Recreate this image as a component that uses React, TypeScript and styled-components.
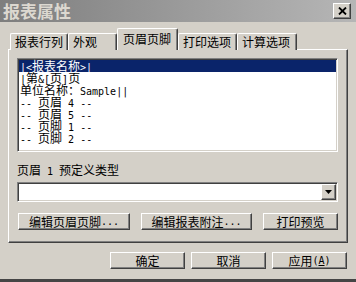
import React from "react";
import styled, { createGlobalStyle, css } from "styled-components";

const Global = createGlobalStyle`
  html, body { margin: 0; padding: 0; background: #d4d0c8; }
  body { font-family: "Noto Sans CJK SC", sans-serif; font-size: 12px; color: #000; }
  * { box-sizing: border-box; }
`;

const raised = css`
  border: 1px solid;
  border-color: #ffffff #404040 #404040 #ffffff;
  box-shadow: inset -1px -1px #808080;
`;

const sunken = css`
  border: 1px solid;
  border-color: #808080 #ffffff #ffffff #808080;
  box-shadow: inset 1px 1px #404040, inset -1px -1px #d4d0c8;
`;

const Window = styled.div`
  width: 356px;
  height: 282px;
  background: #d4d0c8;
  display: flex;
  flex-direction: column;
  border-bottom: 3px solid #454545;
  overflow: hidden;
`;

const TitleBar = styled.div`
  height: 22px;
  flex: none;
  display: flex;
  align-items: center;
  justify-content: space-between;
  padding: 0 5px 0 3px;
  background: linear-gradient(to right, #7e7e7e, #b6b6b6);
`;

const Title = styled.span`
  font-size: 17px;
  font-weight: 700;
  line-height: 18px;
  color: #dcd8d0;
`;

const CloseButton = styled.div`
  width: 18px;
  height: 16px;
  background: #d4d0c8;
  ${raised};
  display: flex;
  align-items: center;
  justify-content: center;
`;

const TabStrip = styled.div`
  margin-top: 6px;
  height: 22px;
  padding-left: 10px;
  display: flex;
  align-items: flex-end;
  margin-bottom: -1px;
  position: relative;
  z-index: 1;
`;

const Tab = styled.div<{ $w: number; $active?: boolean }>`
  width: ${(p) => p.$w}px;
  height: ${(p) => (p.$active ? 22 : 17)}px;
  background: #d4d0c8;
  border-top: 1px solid #ffffff;
  border-left: 1px solid #ffffff;
  border-right: 1px solid #404040;
  box-shadow: inset -1px 0 #808080;
  border-top-left-radius: 2px;
  border-top-right-radius: 2px;
  display: flex;
  align-items: center;
  padding-left: ${(p) => (p.$active ? 5 : 4)}px;
  padding-bottom: ${(p) => (p.$active ? 2 : 0)}px;
  white-space: nowrap;
  line-height: 14px;
`;

const Panel = styled.div`
  margin-left: 8px;
  width: 340px;
  height: 194px;
  flex: none;
  ${raised};
  padding: 8px 8px 0 8px;
  display: flex;
  flex-direction: column;
`;

const ListBox = styled.div`
  width: 321px;
  height: 94px;
  flex: none;
  background: #ffffff;
  ${sunken};
  padding: 1px;
  display: flex;
  flex-direction: column;
`;

const ListItem = styled.div<{ $selected?: boolean }>`
  height: 12px;
  line-height: 12px;
  padding-left: 1px;
  white-space: pre;
  background: ${(p) => (p.$selected ? "#0a246a" : "transparent")};
  color: ${(p) => (p.$selected ? "#ffffff" : "#000000")};
`;

const Latin = styled.span`
  font-family: "DejaVu Sans Mono", "Liberation Mono", monospace;
  font-size: 10px;
`;

const Label = styled.div`
  margin-top: 11px;
  height: 14px;
  line-height: 14px;
  white-space: pre;
`;

const Combo = styled.div`
  margin-top: 5px;
  width: 321px;
  height: 20px;
  flex: none;
  background: #ffffff;
  ${sunken};
  padding: 1px;
  display: flex;
  justify-content: flex-end;
`;

const DropButton = styled.div`
  width: 15px;
  height: 16px;
  background: #d4d0c8;
  ${raised};
  display: flex;
  align-items: center;
  justify-content: center;
`;

const ButtonRow = styled.div`
  margin-top: 11px;
  margin-left: 1px;
  display: flex;
  gap: 11px;
`;

const Button = styled.div<{ $w: number }>`
  width: ${(p) => p.$w}px;
  height: 17px;
  background: #d4d0c8;
  ${raised};
  display: flex;
  align-items: center;
  justify-content: center;
  line-height: 14px;
  white-space: pre;
`;

const FooterRow = styled.div`
  margin-top: 9px;
  padding-right: 9px;
  display: flex;
  justify-content: flex-end;
  gap: 6px;
`;

function Mixed({ text }: { text: string }) {
  const parts = text.match(/[\x00-\x7f]+|[^\x00-\x7f]+/g) ?? [];
  return (
    <>
      {parts.map((p, i) =>
        /^[\x00-\x7f]/.test(p) ? (
          <Latin key={i}>{p}</Latin>
        ) : (
          <React.Fragment key={i}>{p}</React.Fragment>
        )
      )}
    </>
  );
}

const tabs = [
  { label: "报表行列", w: 58 },
  { label: "外观", w: 49 },
  { label: "页眉页脚", w: 61, active: true },
  { label: "打印选项", w: 59 },
  { label: "计算选项", w: 60 },
];

const items = [
  "|<报表名称>|",
  "|第&[页]页",
  "单位名称：Sample||",
  "-- 页眉 4 --",
  "-- 页眉 5 --",
  "-- 页脚 1 --",
  "-- 页脚 2 --",
];

export default function App() {
  return (
    <>
      <Global />
      <Window>
        <TitleBar>
          <Title>报表属性</Title>
          <CloseButton>
            <svg width="9" height="8" viewBox="0 0 9 8">
              <path d="M1 0.5 L8 7.5 M8 0.5 L1 7.5" stroke="#000" strokeWidth="1.8" />
            </svg>
          </CloseButton>
        </TitleBar>
        <TabStrip>
          {tabs.map((t) => (
            <Tab key={t.label} $w={t.w} $active={t.active}>
              {t.label}
            </Tab>
          ))}
        </TabStrip>
        <Panel>
          <ListBox>
            {items.map((it, i) => (
              <ListItem key={i} $selected={i === 0}>
                <Mixed text={it} />
              </ListItem>
            ))}
          </ListBox>
          <Label>
            <Mixed text="页眉 1 预定义类型" />
          </Label>
          <Combo>
            <DropButton>
              <svg width="7" height="4" viewBox="0 0 7 4">
                <polygon points="0,0 7,0 3.5,4" fill="#000" />
              </svg>
            </DropButton>
          </Combo>
          <ButtonRow>
            <Button $w={112}>
              <Mixed text="编辑页眉页脚..." />
            </Button>
            <Button $w={111}>
              <Mixed text="编辑报表附注..." />
            </Button>
            <Button $w={75}>打印预览</Button>
          </ButtonRow>
        </Panel>
        <FooterRow>
          <Button $w={75}>确定</Button>
          <Button $w={75}>取消</Button>
          <Button $w={75}>
            应用
            <Latin>
              (<u>A</u>)
            </Latin>
          </Button>
        </FooterRow>
      </Window>
    </>
  );
}
